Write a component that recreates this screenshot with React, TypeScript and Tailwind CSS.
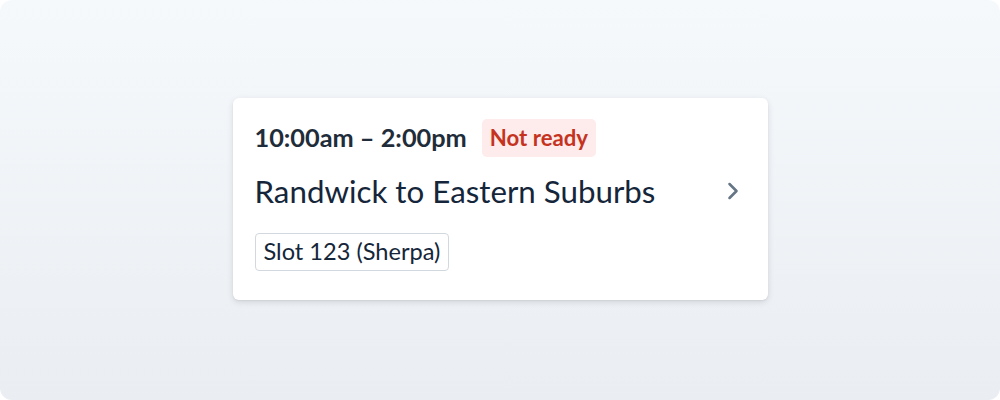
import { ChevronRight } from 'lucide-react'

export default function App() {
  return (
    <div className="bg-white">
      <div
        className="flex h-[400px] w-[1000px] items-start justify-center rounded-[12px] bg-gradient-to-b from-[#f6f9fc] to-[#eaedf1] pt-[98px]"
        style={{ fontFamily: 'Lato, "Noto Sans", sans-serif' }}
      >
        <div className="flex w-[535px] flex-col rounded-[6px] bg-white pb-[29px] pl-[22px] pr-[22px] pt-[21px] shadow-[0_2px_6px_rgba(15,23,42,0.12),0_1px_2px_rgba(15,23,42,0.06)]">
          {/* Time + status */}
          <div className="flex h-[38px] items-center gap-[15px]">
            <span className="text-[25.3px] font-bold leading-none text-[#1f2d3a]">10:00am – 2:00pm</span>
            <span className="flex h-[38px] items-center rounded-[5px] bg-[#fdeceb] px-[8px] text-[22.2px] font-bold text-[#c5331f]">
              Not ready
            </span>
          </div>

          {/* Route */}
          <div className="mt-[15px] flex h-[38px] items-center justify-between">
            <span className="text-[31.3px] leading-[38px] text-[#15263a]">Randwick to Eastern Suburbs</span>
            <ChevronRight className="-mr-[1px] h-[28px] w-[28px] text-[#667585]" strokeWidth={2.2} />
          </div>

          {/* Slot tag */}
          <div className="mt-[23px] flex">
            <span className="flex h-[38px] items-center rounded-[4px] border border-[#d3d8de] px-[8px] text-[23.6px] text-[#15263a]">
              Slot 123 (Sherpa)
            </span>
          </div>
        </div>
      </div>
    </div>
  )
}
